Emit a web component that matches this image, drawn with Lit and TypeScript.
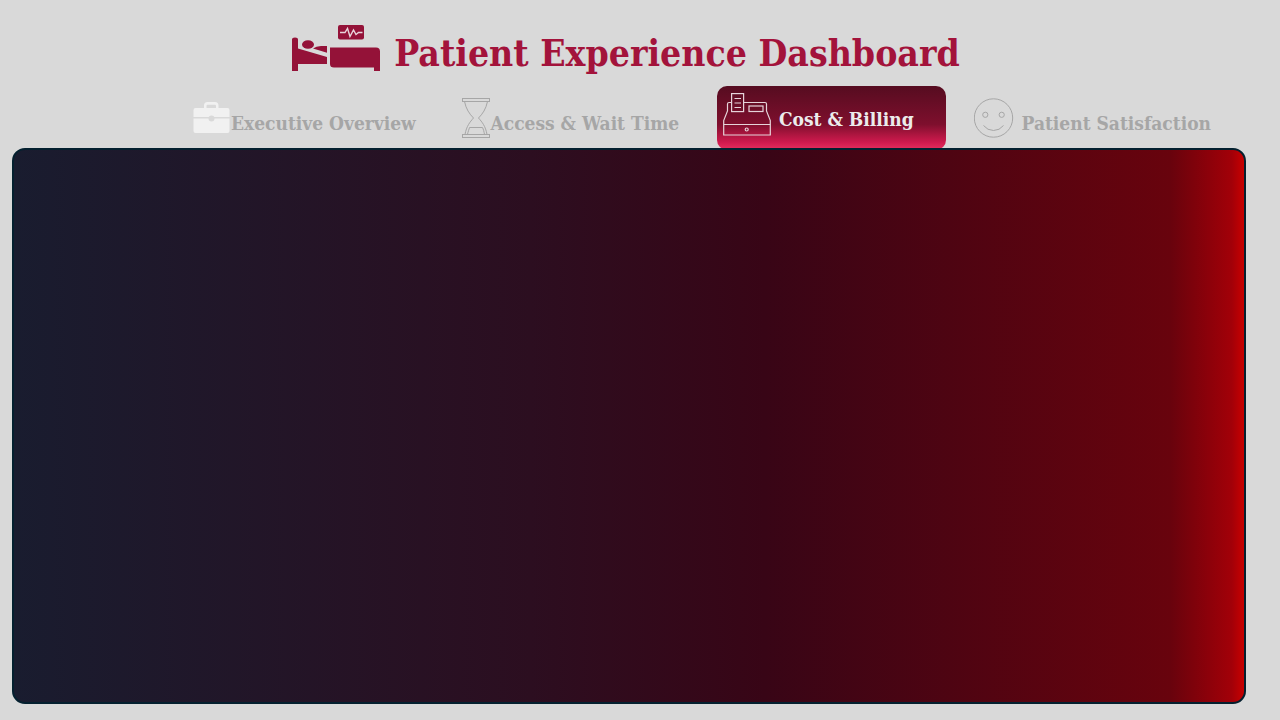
import { LitElement, html, css } from "lit";
import { customElement, state } from "lit/decorators.js";

const briefcase = html`<svg class="icon" width="38" height="32" viewBox="0 0 38 32">
  <path fill="#f1f1f1" fill-rule="evenodd" d="M2.500 6H11V3.500Q11 0 14.500 0H22Q25.500 0 25.500 3.500V6H34.500Q36.500 6 36.500 8V15H0.500V8Q0.500 6 2.500 6ZM13.500 6H23V4Q23 2.800 21.800 2.800H14.700Q13.500 2.800 13.500 4Z"/>
  <path fill="#f1f1f1" d="M0.500 16.500H36.500V29Q36.500 31 34.500 31H2.500Q0.500 31 0.500 29Z"/>
  <ellipse fill="#d9d9d9" cx="18.500" cy="16.500" rx="3" ry="3"/>
</svg>`;

const hourglass = html`<svg class="icon" width="28" height="40" viewBox="0 0 28 40">
  <g fill="none" stroke="#a6a6a6" stroke-width="1">
    <rect x="0.500" y="0.500" width="27" height="3"/>
    <rect x="0.500" y="36.500" width="27" height="3"/>
    <path d="M2.500 3.500C4 11 7.500 16 11.500 20C8 24 4.500 28 3 36.500M25.500 3.500C24 11 20.500 16 16.500 20C20 24 23.500 28 25 36.500"/>
    <path d="M5.500 36.500C6 33.500 7 31.500 7.500 29.500H20.500C21.500 31.500 22 33.500 22.500 36.500"/>
  </g>
</svg>`;

const register = html`<svg class="icon" width="48" height="43" viewBox="0 0 48 43">
  <g fill="none" stroke="#e6d3d9" stroke-width="1.200">
    <path d="M8.500 9.500H6Q4.500 9.500 4.500 11V18L0.700 27.500V42H47.300V27.500L43.500 18V11Q43.500 9.500 42 9.500H21"/>
    <path d="M0.700 31.500H47.300"/>
    <rect x="8.600" y="0.600" width="12" height="18"/>
    <path d="M11.500 5.500H18M11.500 10H18M11.500 14.500H18"/>
    <rect x="26" y="13" width="14" height="5.500"/>
    <circle cx="23.700" cy="36.500" r="1.500"/>
  </g>
</svg>`;

const smiley = html`<svg class="icon" width="40" height="40" viewBox="0 0 40 40">
  <g fill="none" stroke="#a6a6a6" stroke-width="1">
    <circle cx="19.500" cy="20" r="19.200"/>
    <circle cx="11.300" cy="16.800" r="2.600"/>
    <circle cx="27.700" cy="16.800" r="2.600"/>
    <path d="M9.500 27.500Q13.500 32.500 19.500 32.500T29.500 27.500"/>
  </g>
</svg>`;

const bed = html`<svg class="logo" width="89" height="47" viewBox="0 0 89 47">
  <g fill="#941238">
    <path d="M0 46V14.500Q0 12.500 3 12.500T6 14.500V23.500L35 32V39H6V46Z"/>
    <ellipse cx="16" cy="19.500" rx="6" ry="4.300"/>
    <path d="M21 23.500Q24 21 29 21H35V27.800Z"/>
    <path d="M38 22.500H84Q88 22.500 88 26.500V46H82V42.500H42Q38 42.500 38 39Z"/>
    <rect x="46" y="0" width="26" height="14.500" rx="2"/>
  </g>
  <path d="M48 7.500H53L55.500 3.500L58 11.500L61.500 5L64 9.500L66.500 7.500H70.500" fill="none" stroke="#e8d5db" stroke-width="1.400"/>
</svg>`;

const pages = [
  { id: "executive", label: "Executive Overview", icon: briefcase },
  { id: "access", label: "Access & Wait Time", icon: hourglass },
  { id: "cost", label: "Cost & Billing", icon: register },
  { id: "satisfaction", label: "Patient Satisfaction", icon: smiley },
];

@customElement("app-root")
export class AppRoot extends LitElement {
  static styles = css`
    :host {
      display: flex;
      flex-direction: column;
      box-sizing: border-box;
      min-height: 100vh;
      padding: 24px 34px 16px 12px;
      background: #d9d9d9;
      font-family: "DejaVu Serif Condensed", "DejaVu Serif", serif;
      font-weight: 700;
    }
    svg {
      display: block;
      flex: none;
    }
    .header {
      display: flex;
      justify-content: center;
      align-items: center;
      gap: 13px;
      height: 48px;
      padding-right: 6px;
    }
    .title {
      margin: 0;
      padding-top: 10px;
      color: #a3133b;
      font-size: 37px;
      line-height: 42px;
      white-space: nowrap;
    }
    .nav {
      display: grid;
      grid-template-columns: 18fr 17fr 17fr 16fr;
      margin: 14px 35px 0 181px;
      height: 62px;
    }
    .tab {
      display: flex;
      align-items: center;
      box-sizing: border-box;
      height: 64px;
      color: #a6a6a6;
      font-size: 19px;
      line-height: 24px;
      text-decoration: none;
      white-space: nowrap;
    }
    .label {
      padding-top: 10px;
    }
    .tab:last-child {
      justify-self: end;
      gap: 8px;
    }
    .active {
      width: 90%;
      gap: 8px;
      padding: 0 6px 8px;
      border-radius: 10px;
      background: linear-gradient(#560c20 0%, #7e0f2d 60%, #d01a4e 88%, #e8305f 100%);
      color: #ececec;
    }
    .panel {
      position: relative;
      flex: 1;
      border: 2px solid #04202f;
      border-radius: 13px;
      background: linear-gradient(
        90deg,
        #191c2f 0%,
        #2c0e20 42%,
        #380516 61%,
        #68030d 94%,
        #a20008 99%,
        #c80000 100%
      );
    }
  `;

  @state() private current = "cost";

  render() {
    return html`
      <header class="header">
        ${bed}
        <h1 class="title">Patient Experience Dashboard</h1>
      </header>
      <nav class="nav">
        ${pages.map(
          (p) => html`<a
            class="tab ${p.id === this.current ? "active" : ""}"
            href="#${p.id}"
            @click=${() => (this.current = p.id)}
            >${p.icon}<span class="label">${p.label}</span></a
          >`
        )}
      </nav>
      <main class="panel"></main>
    `;
  }
}
